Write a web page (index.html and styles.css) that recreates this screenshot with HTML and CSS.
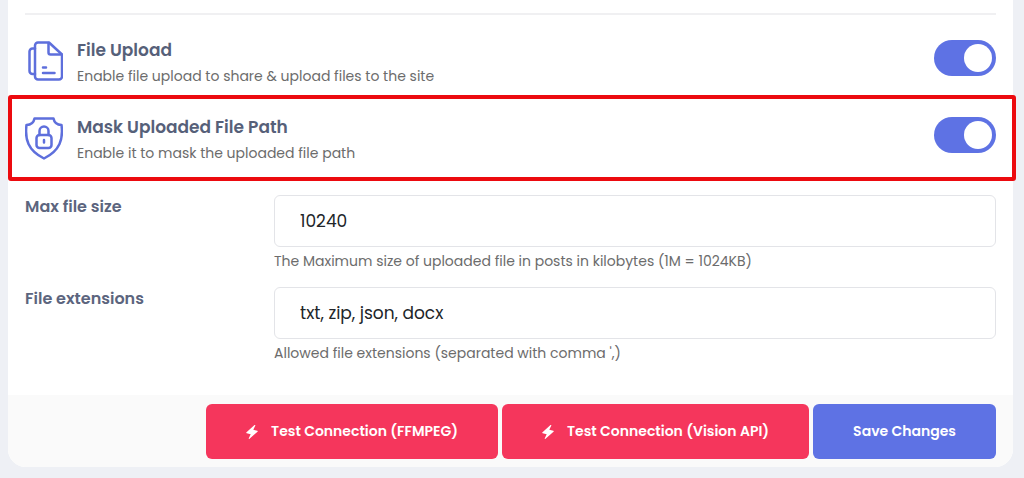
FILE: index.html
```html
<!DOCTYPE html>
<html lang="en">
<head>
    <meta charset="UTF-8">
    <meta name="viewport" content="width=device-width, initial-scale=1.0">
    <title>Upload Settings</title>
    <link rel="stylesheet" href="styles.css">
</head>
<body>

<form class="card">
    <div class="card-body">
        <hr class="divider">

        <!-- File upload switch -->
        <div class="option-row">
            <svg class="option-icon" viewBox="0 0 38 44" aria-hidden="true">
                <path d="M13 2.500h11L37 14.500v22a3 3 0 0 1-3 3H13a3 3 0 0 1-3-3V5.500a3 3 0 0 1 3-3z"/>
                <path d="M23.500 3v9.500a2 2 0 0 0 2 2h11"/>
                <path d="M10 8.500H7.500a3 3 0 0 0-3 3v19.500a3 3 0 0 0 3 3H10"/>
                <path d="M18 27.500h3M18 33h11.500"/>
            </svg>
            <div class="option-text">
                <label class="option-title" for="fileUpload">File Upload</label>
                <div class="option-info">Enable file upload to share &amp; upload files to the site</div>
            </div>
            <input class="switch" type="checkbox" id="fileUpload" checked>
        </div>

        <!-- Mask path switch -->
        <div class="option-row highlighted">
            <svg class="option-icon" viewBox="0 0 38 44" aria-hidden="true">
                <path d="M9.500 1.500h19c.8 4.200 3.500 6.300 8 6.500.8 6.500.6 13.500-2 19C31.500 33.500 26 38 19 41.500 12 38 6.500 33.500 3.500 27 .9 21.500.7 14.500 1.500 8c4.500-.2 7.200-2.300 8-6.500z"/>
                <rect x="11.500" y="18" width="15" height="13" rx="3"/>
                <path d="M14.500 18v-4a4.500 4.500 0 0 1 9 0v4M19 23v2.500"/>
            </svg>
            <div class="option-text">
                <label class="option-title" for="maskPath">Mask Uploaded File Path</label>
                <div class="option-info">Enable it to mask the uploaded file path</div>
            </div>
            <input class="switch" type="checkbox" id="maskPath" checked>
        </div>

        <div class="form-row">
            <label class="form-label" for="maxSize">Max file size</label>
            <div class="form-field">
                <input class="form-control" type="text" id="maxSize" value="10240">
                <div class="form-help">The Maximum size of uploaded file in posts in kilobytes (1M = 1024KB)</div>
            </div>
        </div>

        <div class="form-row">
            <label class="form-label" for="extensions">File extensions</label>
            <div class="form-field">
                <input class="form-control" type="text" id="extensions" value="txt, zip, json, docx">
                <div class="form-help">Allowed file extensions (separated with comma ',)</div>
            </div>
        </div>
    </div>

    <div class="card-footer">
        <button class="btn btn-danger" type="button">
            <svg class="bolt" viewBox="0 0 12 14" aria-hidden="true"><path d="M8.500 0L.5 7.300a.6.6 0 0 0 .2 1L4.700 9.300 2.800 13.300a.4.4 0 0 0 .7.500L11.500 6.700a.6.6 0 0 0-.2-1L7.300 4.700 9.200.700a.4.4 0 0 0-.7-.7z"/></svg>
            Test Connection (FFMPEG)
        </button>
        <button class="btn btn-danger" type="button">
            <svg class="bolt" viewBox="0 0 12 14" aria-hidden="true"><path d="M8.500 0L.5 7.300a.6.6 0 0 0 .2 1L4.700 9.300 2.800 13.300a.4.4 0 0 0 .7.500L11.500 6.700a.6.6 0 0 0-.2-1L7.300 4.700 9.200.700a.4.4 0 0 0-.7-.7z"/></svg>
            Test Connection (Vision API)
        </button>
        <button class="btn btn-primary" type="submit">Save Changes</button>
    </div>
</form>

</body>
</html>
```
FILE: styles.css
```css
* {
    box-sizing: border-box;
}

body {
    margin: 0;
    background-color: #eef0f5;
    font-family: "Poppins", "Inter", sans-serif;
    font-size: 14px;
    line-height: 20px;
}

.card {
    margin: 0 11px 11px 8px;
    background-color: #ffffff;
    border-radius: 0 0 18px 18px;
}

.card-body {
    padding: 13px 17px 16px;
}

.divider {
    margin: 0;
    border: 0;
    border-top: 2px solid #f0f0f2;
}

/* switches */
.option-row {
    display: flex;
    align-items: flex-start;
    gap: 14px;
    padding: 25px 0 9px;
}

.highlighted {
    margin: 0 -20px 14px -17px;
    padding: 18px 16px 14px 13px;
    border: 4px solid #ec0a0f;
    border-radius: 3px;
}

.option-icon {
    flex: none;
    width: 38px;
    height: 44px;
    fill: none;
    stroke: #5e6fdc;
    stroke-width: 2.5;
    stroke-linecap: round;
    stroke-linejoin: round;
}

.option-text {
    flex: 1;
}

.option-title {
    display: block;
    margin-bottom: 6px;
    font-size: 17px;
    font-weight: 600;
    color: #566079;
}

.option-info,
.form-help {
    font-size: 14px;
    color: #6c6c6c;
}

.switch {
    appearance: none;
    flex: none;
    width: 62px;
    height: 36px;
    margin: 0;
    padding: 4px;
    border-radius: 18px;
    background-color: #ced4da;
    cursor: pointer;
}

.switch::before {
    content: "";
    display: block;
    width: 28px;
    height: 28px;
    border-radius: 50%;
    background-color: #ffffff;
}

.switch:checked {
    background-color: #5e72e4;
}

.switch:checked::before {
    margin-left: auto;
}

/* fields */
.form-row {
    display: grid;
    grid-template-columns: 249px 1fr;
    margin-bottom: 16px;
}

.form-label {
    padding-top: 2px;
    font-size: 16px;
    font-weight: 600;
    color: #5c657e;
}

.form-control {
    display: block;
    width: 100%;
    height: 52px;
    margin-bottom: 4px;
    padding: 0 25px;
    border: 1px solid #e3e4e8;
    border-radius: 6px;
    background-color: #ffffff;
    font-family: inherit;
    font-size: 17px;
    color: #212529;
}

/* footer */
.card-footer {
    display: flex;
    justify-content: flex-end;
    gap: 4px;
    padding: 9px 17px 8px;
    border-radius: 0 0 18px 18px;
    background-color: #fafafa;
}

.btn {
    display: flex;
    align-items: center;
    gap: 13px;
    height: 55px;
    padding: 0 40px;
    border: 0;
    border-radius: 6px;
    font-family: inherit;
    font-size: 14px;
    font-weight: 600;
    color: #ffffff;
    cursor: pointer;
}

.btn-danger {
    background-color: #f5365c;
}

.btn-primary {
    background-color: #5e72e4;
}

.bolt {
    width: 12px;
    height: 14px;
    fill: #ffffff;
}
```
